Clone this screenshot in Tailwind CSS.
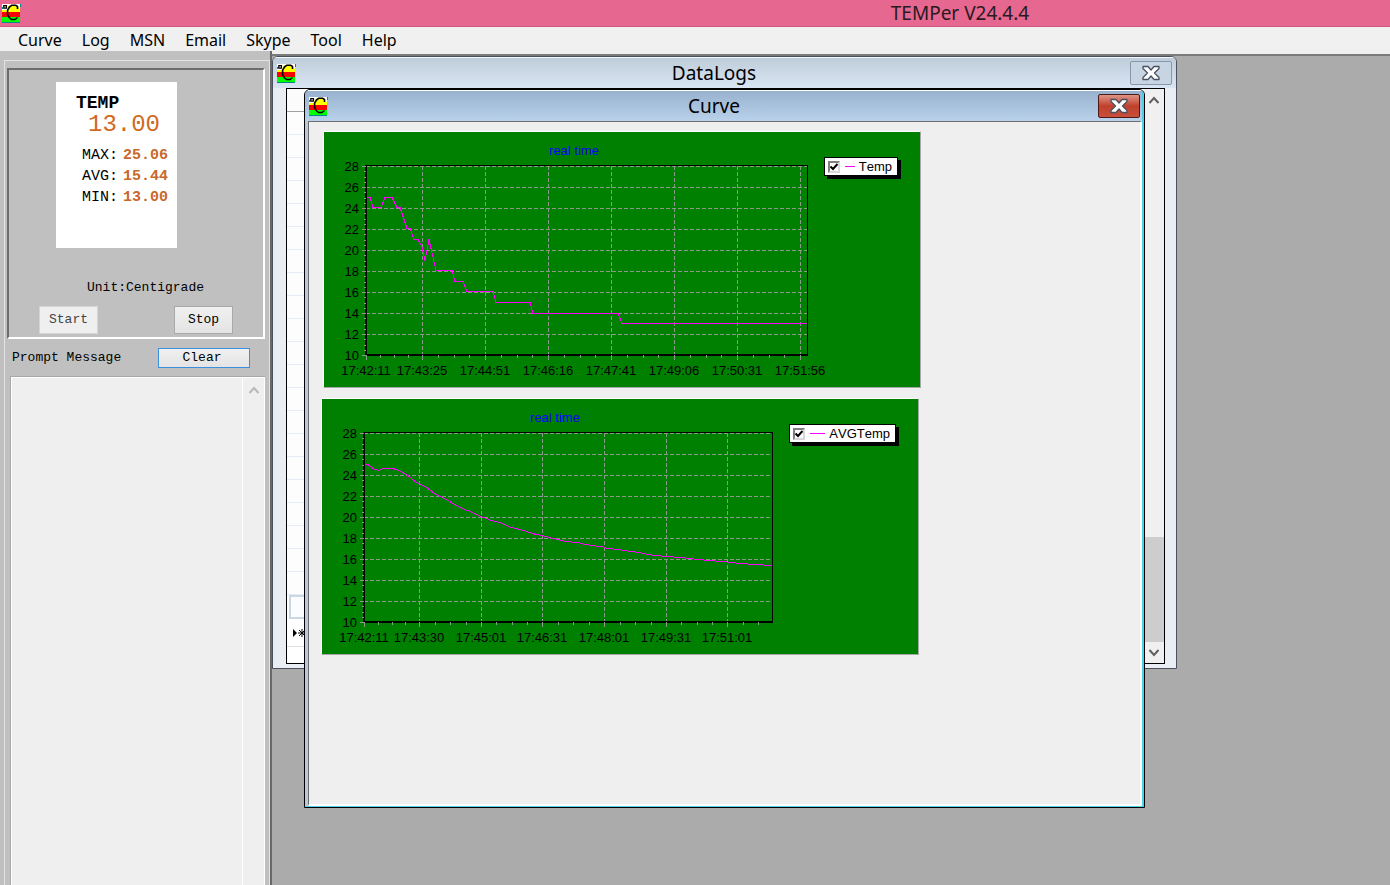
<!DOCTYPE html>
<html lang="en">
<head>
<meta charset="utf-8">
<title>TEMPer V24.4.4</title>
<script src="https://cdn.jsdelivr.net/npm/@tailwindcss/browser@4"></script>
</head>
<body class="h-screen flex flex-col overflow-hidden bg-[#c0c0c0] text-black font-['Noto_Sans','Open_Sans',sans-serif]">
<svg class="hidden" aria-hidden="true">
  <symbol id="logo" viewBox="0 0 19 19">
    <path fill="#fff" d="M0 0h18v9H0z"/>
    <path fill="#ff0" d="M6 2l3-1h6l2 3 1 1v4H0V6h5z"/>
    <path fill="#f00" d="M0 8h18v6H0z"/>
    <path fill="#0f0" d="M0 13h18v5H0z"/>
    <path fill="#088" d="M0 18h18v1H0zM18 0h1v3h-1zM0 3h1v2H0z"/>
    <path fill="none" stroke="#000" stroke-width="1.3" d="M1.800 1.600h2.600v2.600H1.800z"/>
    <path fill="none" stroke="#000" stroke-width="1.600" stroke-linejoin="round" d="M15.500 5V2.500L13.500 1.200H10L7.500 3 5.600 6.200v4.500L7.200 13.500 9.500 15.500h3.500l2.500-2"/>
  </symbol>
  <symbol id="close" viewBox="0 0 20 16">
    <path fill="#fff" stroke="#4a5060" stroke-width="1.300" stroke-linejoin="round" d="M2 1.500h5L10 5l3-3.500h5v2L13.500 8l4.500 4.500v2h-5L10 11l-3 3.500H2v-2L6.500 8 2 3.500z"/>
  </symbol>
</svg>

<header class="h-[27px] shrink-0 flex items-center pl-[2px] bg-[#e66790] border-b border-[#cf5a80]">
  <svg class="size-[19px]"><use href="#logo"/></svg>
  <h1 class="flex-1 pl-[509px] text-center text-[19px] leading-6 text-[#2a1a20]">TEMPer V24.4.4</h1>
</header>

<nav class="h-6 shrink-0 flex items-center gap-5 pl-[18px] pt-[2px] bg-[#f0f0f0] text-base leading-5">
  <a href="#curve">Curve</a><a href="#log">Log</a><a href="#msn">MSN</a><a href="#email">Email</a><a href="#skype">Skype</a><a href="#tool">Tool</a><a href="#help">Help</a>
</nav>

<div class="flex-1 min-h-0 flex">
  <aside class="w-[270px] shrink-0 pl-1 pt-[9px] flex flex-col text-[13px] font-['Liberation_Mono',monospace]">
    <div class="flex-1 min-h-0 flex flex-col border-l border-t border-r border-[#e3e3e3] pl-[2px] pr-1 pt-[7px]">
      <section class="h-[271px] shrink-0 flex flex-col border-2 border-t-[#6d6d6d] border-l-[#6d6d6d] border-r-white border-b-white pt-3 pl-[30px]">
        <div class="w-[121px] h-[166px] ml-[17px] pt-[11px] bg-white">
          <h2 class="pl-5 text-lg leading-5 font-bold">TEMP</h2>
          <p class="pl-8 text-2xl leading-6 text-[#d2691e]">13.00</p>
          <dl class="grid grid-cols-[41px_auto] pl-[26px] pt-2 text-[15px] leading-[21px]">
            <dt>MAX:</dt><dd class="font-bold text-[#c8692c]">25.06</dd>
            <dt>AVG:</dt><dd class="font-bold text-[#c8692c]">15.44</dd>
            <dt>MIN:</dt><dd class="font-bold text-[#c8692c]">13.00</dd>
          </dl>
        </div>
        <p class="pl-12 pt-[30px] leading-5">Unit:Centigrade</p>
        <div class="flex justify-between pt-2 pr-[30px]">
          <button disabled class="w-[59px] h-7 bg-[#efefef] border border-[#d5d5d5] text-[#444]">Start</button>
          <button class="w-[59px] h-7 bg-linear-to-b from-[#f0f0f0] to-[#e4e4e4] border border-[#a9a9a9]">Stop</button>
        </div>
      </section>
      <div class="flex items-center justify-between h-[37px] shrink-0 pl-[5px] pr-[15px]">
        <label for="messages">Prompt Message</label>
        <button class="w-[92px] h-5 bg-linear-to-b from-[#f0f0f0] to-[#e4e4e4] border border-[#3c8fdc] pr-1 leading-[18px]">Clear</button>
      </div>
      <div class="flex-1 min-h-0 ml-[3px] flex border-t border-l border-[#a8a8a8]">
        <div class="flex-1 flex border-t border-l border-r border-white bg-[#efefef]">
          <textarea id="messages" class="flex-1 min-w-0 resize-none bg-transparent outline-none"></textarea>
          <div class="w-[22px] border-l border-white flex justify-center pt-2">
            <svg class="w-3 h-2" viewBox="0 0 12 8"><path fill="none" stroke="#b8b8b8" stroke-width="2" d="M1.500 7L6 2l4.500 5"/></svg>
          </div>
        </div>
      </div>
    </div>
  </aside>

  <main class="relative flex-1 overflow-hidden bg-[#ababab] border-l-2 border-[#696969]">
    <div class="h-[5px] bg-[#f0f0f0] border-b-2 border-[#7a7a7a]"></div>

    <section class="absolute left-0 top-[5px] w-[905px] h-[613px] flex flex-col rounded-t-md border border-[#4a505c] bg-[#e9eef4] overflow-hidden">
      <div class="h-[31px] shrink-0 flex items-center pl-1 pr-1 bg-linear-to-b from-[#bfccda] to-[#d9e5f2] border-t border-white/70">
        <svg class="size-[19px]"><use href="#logo"/></svg>
        <h2 class="flex-1 pl-[2px] text-center text-[19px] leading-6">DataLogs</h2>
        <button aria-label="Close DataLogs" class="w-[42px] h-6 flex items-center justify-center border border-[#8796aa] rounded-[2px] bg-[#c7d4e2]"><svg class="w-5 h-4"><use href="#close"/></svg></button>
      </div>
      <div class="flex-1 flex ml-[13px] mr-[11px] mb-1 border border-black bg-white">
        <div class="flex-1 flex flex-col">
          <div class="h-[23px] border-b border-[#a0a0a0] bg-[#fbfbfb]"></div>
          <div class="h-[483px] bg-[#fdfdfe] bg-[repeating-linear-gradient(to_bottom,transparent_0_22px,#e4eaf6_22px_23px)]"></div>
          <div class="h-6 ml-[2px] border-2 border-[#c9d7e4] bg-[#fafcff]"></div>
          <div class="h-7 flex items-center pl-[6px] border-b border-[#e0e0e0]">
            <svg class="w-[14px] h-3" viewBox="0 0 14 12"><path d="M0 2l4 4-4 4z"/><path stroke="#000" d="M9 2v8M5 6h8M6 3l6 6M12 3L6 9"/></svg>
          </div>
        </div>
        <div class="w-[21px] shrink-0 flex flex-col items-center bg-[#f0f0f0] pt-[7px] pb-[6px]">
          <svg class="w-3 h-2" viewBox="0 0 12 8"><path fill="none" stroke="#606060" stroke-width="2" d="M1.500 7L6 2l4.500 5"/></svg>
          <div class="mt-auto mb-[7px] h-[105px] w-full bg-[#cdcdcd]"></div>
          <svg class="w-3 h-2" viewBox="0 0 12 8"><path fill="none" stroke="#606060" stroke-width="2" d="M1.500 1L6 6l4.500-5"/></svg>
        </div>
      </div>
    </section>

    <section class="absolute left-8 top-[38px] w-[841px] h-[719px] flex rounded-t-md border border-black bg-[#b9c9d9] overflow-hidden">
      <div class="flex-1 flex flex-col border-r-2 border-b border-[#4fd0ea]">
        <div class="h-[31px] shrink-0 flex items-center pl-1 pr-[2px] bg-linear-to-b from-[#98b2cf] to-[#b9d1ea] border-t border-white">
          <svg class="size-[19px]"><use href="#logo"/></svg>
          <h2 class="flex-1 pl-[2px] text-center text-[19px] leading-6">Curve</h2>
          <button aria-label="Close Curve" class="w-[42px] h-6 flex items-center justify-center border border-[#501818] rounded-[2px] bg-linear-to-b from-[#dc9486] via-[#c0402c] to-[#c8503c]"><svg class="w-5 h-4"><use href="#close"/></svg></button>
        </div>
        <div class="flex-1 flex flex-col items-start gap-[10px] ml-[3px] border-l border-t border-l-[#6c6c6c] border-t-[#6c6c6c] border-r-2 border-b-2 border-r-white border-b-white bg-[#efefef] pl-[12px] pt-[9px]">
          <figure class="ml-[2px] w-[598px] h-[257px] flex justify-between items-start bg-[#008000] border border-t-white border-l-white border-r-[#a8a8a8] border-b-[#a8a8a8]">
            <svg id="realtime" class="w-[486px] h-[255px] overflow-visible text-[13px] font-['Liberation_Sans',Arial,sans-serif]"></svg>
            <label class="mt-[25px] mr-[22px] h-[19px] flex items-center pl-[3px] pr-[5px] border border-black bg-white shadow-[3px_3px_0_#000] text-[13px] leading-4 [font-kerning:none] font-['Liberation_Sans',Arial,sans-serif]">
              <input type="checkbox" checked class="appearance-none size-3 border-2 border-t-[#808080] border-l-[#808080] border-r-[#d8d8d8] border-b-[#d8d8d8] bg-[url('data:image/svg+xml,%3Csvg%20xmlns=%22http://www.w3.org/2000/svg%22%20viewBox=%220%200%208%208%22%3E%3Cpath%20fill=%22none%22%20stroke=%22black%22%20stroke-width=%222%22%20d=%22M0.5%203.500L3%206L7.500%201%22/%3E%3C/svg%3E')]">
              <span class="w-[10px] h-px ml-[5px] mr-1 bg-[#f0f]"></span>Temp
            </label>
          </figure>
          <figure class="w-[598px] h-[257px] flex justify-between items-start bg-[#008000] border border-t-white border-l-white border-r-[#a8a8a8] border-b-[#a8a8a8]">
            <svg id="average" class="w-[453px] h-[255px] overflow-visible text-[13px] font-['Liberation_Sans',Arial,sans-serif]"></svg>
            <label class="mt-[25px] mr-[22px] h-[19px] flex items-center pl-[3px] pr-[5px] border border-black bg-white shadow-[3px_3px_0_#000] text-[13px] leading-4 [font-kerning:none] font-['Liberation_Sans',Arial,sans-serif]">
              <input type="checkbox" checked class="appearance-none size-3 border-2 border-t-[#808080] border-l-[#808080] border-r-[#d8d8d8] border-b-[#d8d8d8] bg-[url('data:image/svg+xml,%3Csvg%20xmlns=%22http://www.w3.org/2000/svg%22%20viewBox=%220%200%208%208%22%3E%3Cpath%20fill=%22none%22%20stroke=%22black%22%20stroke-width=%222%22%20d=%22M0.5%203.500L3%206L7.500%201%22/%3E%3C/svg%3E')]">
              <span class="w-[15px] h-px ml-[5px] mr-1 bg-[#f0f]"></span>AVGTemp
            </label>
          </figure>
        </div>
      </div>
    </section>
  </main>
</div>

<script>
// Draws one chart: frame, dashed grid, ticks, axis labels and the series.
function drawChart(id, right, titleX, times, points) {
  const left = 42, top = 34, bottom = 223;
  let grid = '', ticks = '', labels = '';
  for (let v = 28; v >= 10; v -= 2) {
    const y = top + (28 - v) * 10.5;
    if (v > 10) grid += `M${left} ${y + .5}H${right}`;
    ticks += `M${left - 4} ${y + .5}h4`;
    labels += `<text x="35" y="${y + 5}" text-anchor="end">${v}</text>`;
    if (v > 10) for (let i = 1; i < 4; i++) ticks += `M${left - 2} ${Math.round(y + i * 5.25) + .5}h2`;
  }
  times.forEach(([x, t], i) => {
    if (i) grid += `M${x + .5} ${top}V${bottom}`;
    ticks += `M${x + .5} ${bottom}v5`;
    labels += `<text x="${x}" y="${bottom + 20}" text-anchor="middle">${t}</text>`;
    const step = ((i + 1 < times.length ? times[i + 1][0] : x + 62) - x) / 4;
    for (let k = 1; k < 4; k++) {
      const m = Math.round(x + k * step);
      if (m < right) ticks += `M${m + .5} ${bottom}v3`;
    }
  });
  document.getElementById(id).innerHTML =
    `<g shape-rendering="crispEdges" fill="none" stroke="#8c9a8c">
      <path d="M${left} ${top - .5}H${right + .5}V${bottom}" stroke="#000"/>
      <path d="${grid}" stroke-dasharray="4 2"/>
      <path d="M${left} ${top - 1}V${bottom}H${right + 1}" stroke="#000" stroke-width="2"/>
      <path d="${ticks}"/>
      <polyline points="${points}" stroke="#f0f"/>
    </g>
    <text x="${titleX}" y="23" text-anchor="middle" fill="#00f">real time</text>${labels}`;
}
drawChart('realtime', 483, 250,
  [[42,'17:42:11'],[98,'17:43:25'],[161,'17:44:51'],[224,'17:46:16'],[287,'17:47:41'],[350,'17:49:06'],[413,'17:50:31'],[476,'17:51:56']],
  '43,65.500 46,65.500 49,75.500 57,75.500 61,65.500 68,65.500 73,75.500 76,75.500 83,96.500 86,96.500 90,107.500 94,107.500 98,115 101,128.500 105,107.500 112,138.500 128,138.500 131,149.500 139,149.500 143,159.500 169,159.500 172,170.500 206,170.500 209,181.500 294,181.500 298,191.500 483,191.500');
drawChart('average', 450, 233,
  [[42,'17:42:11'],[97,'17:43:30'],[159,'17:45:01'],[220,'17:46:31'],[282,'17:48:01'],[344,'17:49:31'],[405,'17:51:01']],
  '43,65.500 46,65.500 52,70 57,71.500 61,69.500 71,69.500 77,71.500 86,76.500 93,82.500 104,88 114,95.500 125,101 137,108 148,112.500 159,117.500 171,122 179,124 188,128 203,132 214,135.500 220,136.500 233,140 244,142.500 256,143.500 263,145.500 281,148 285,149.500 296,150.500 313,153 333,156.500 344,157.500 359,158.500 376,160.500 393,162 405,163 419,164.500 433,165.500 450,166.500');
</script>
</body>
</html>
